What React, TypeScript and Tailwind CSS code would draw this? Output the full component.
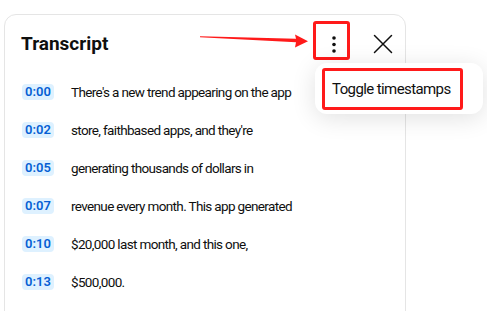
const rows = [
  { time: '0:00', text: "There's a new trend appearing on the app" },
  { time: '0:02', text: "store, faithbased apps, and they're" },
  { time: '0:05', text: 'generating thousands of dollars in' },
  { time: '0:07', text: 'revenue every month. This app generated' },
  { time: '0:10', text: '$20,000 last month, and this one,' },
  { time: '0:13', text: '$500,000.' },
];

export default function App() {
  return (
    <div className="relative w-[487px] h-[311px] overflow-hidden bg-white text-[#0f0f0f] font-['Roboto',sans-serif]">
      <div className="ml-[4px] mt-[14px] w-[402px] h-[330px] rounded-xl border border-[#e5e5e5] bg-white">
        <div className="flex h-[58px] items-center justify-between pl-4 pr-[4px]">
          <h2 className="text-[19px] font-bold">Transcript</h2>
          <div className="flex items-center gap-[13px]">
            <button className="flex h-9 w-9 items-center justify-center">
              <svg width="4" height="17" viewBox="0 0 4 17" fill="#0f0f0f">
                <circle cx="2" cy="2" r="1.8" />
                <circle cx="2" cy="8.5" r="1.8" />
                <circle cx="2" cy="15" r="1.8" />
              </svg>
            </button>
            <button className="flex h-9 w-9 items-center justify-center">
              <svg width="20" height="20" viewBox="0 0 20 20" stroke="#0f0f0f" strokeWidth="1.5" strokeLinecap="round">
                <path d="M1.5 1.5 L18.5 18.5 M18.5 1.5 L1.5 18.5" />
              </svg>
            </button>
          </div>
        </div>
        <div className="flex flex-col pl-[17px]">
          {rows.map((r) => (
            <div key={r.time} className="flex h-[38px] items-center">
              <span className="flex h-4 w-8 items-center justify-center rounded bg-[#def1ff] text-[13px] font-semibold text-[#065fd4]">
                {r.time}
              </span>
              <span className="ml-[17px] text-[13.5px] tracking-[-0.65px]">{r.text}</span>
            </div>
          ))}
        </div>
      </div>

      {/* annotation: arrow + boxes */}
      <svg className="absolute left-0 top-0" width="487" height="311">
        <polygon points="200,36.3 296,38.8 295,34.5 308,41.3 295,47.5 296,42.2 200,37.2" fill="#ff1a1a" />
      </svg>
      <div className="absolute left-[313px] top-[21px] h-[39px] w-[37px] rounded-[3px] border-[3px] border-[#ff1a1a]" />

      <div className="absolute left-[315px] top-[63px] h-[51px] w-[168px] rounded-xl bg-white shadow-[0_4px_24px_rgba(0,0,0,0.12)]">
        <div className="ml-[7px] mt-[5px] flex h-[42px] w-[141px] items-center rounded-[3px] border-[3px] border-[#ff1a1a] pl-[7px] text-[15px] tracking-[-0.6px] text-[#0f0f0f]">
          Toggle timestamps
        </div>
      </div>
    </div>
  );
}
